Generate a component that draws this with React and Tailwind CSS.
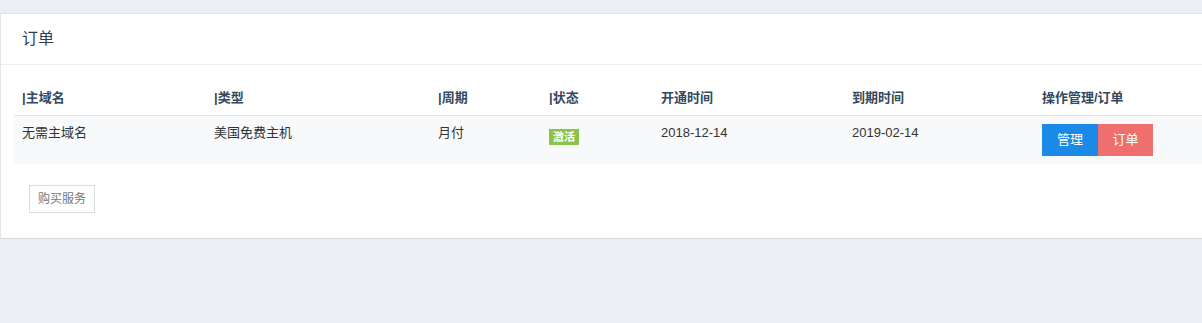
import React from 'react';

const rows = [
  {
    domain: '无需主域名',
    type: '美国免费主机',
    cycle: '月付',
    status: '激活',
    start: '2018-12-14',
    end: '2019-02-14',
  },
];

export default function App() {
  return (
    <div
      className="min-h-[323px] w-full overflow-hidden bg-[#ebeef2] pt-[13px] text-[13px]"
      style={{ fontFamily: '"Liberation Sans", "Noto Sans CJK SC", sans-serif' }}
    >
      {/* Orders panel */}
      <div className="w-[1240px] border-t border-l border-[#e3e6ea] border-b border-b-[#d3d6da] bg-white">
        <div className="flex h-[51px] items-center border-b border-[#eceef1] px-[21px]">
          <h2 className="text-[16px] text-[#2c3e50]">订单</h2>
        </div>

        <div className="pl-[13px] pt-[15px] pb-[25px]">
          <table className="w-full border-collapse text-left">
            <thead>
              <tr className="h-[35px] border-b border-[#e4e7ea] text-[#34495e]">
                <th className="w-[192px] px-2 font-bold">|主域名</th>
                <th className="w-[224px] px-2 font-bold">|类型</th>
                <th className="w-[111px] px-2 font-bold">|周期</th>
                <th className="w-[112px] px-2 font-bold">|状态</th>
                <th className="w-[191px] px-2 font-bold">开通时间</th>
                <th className="w-[190px] px-2 font-bold">到期时间</th>
                <th className="px-2 font-bold">操作管理/订单</th>
              </tr>
            </thead>
            <tbody>
              {rows.map((r) => (
                <tr key={r.domain} className="h-[49px] bg-[#f8f9fb] align-top text-[#333]">
                  <td className="px-2 pt-[8px] leading-[18px]">{r.domain}</td>
                  <td className="px-2 pt-[8px] leading-[18px]">{r.type}</td>
                  <td className="px-2 pt-[8px] leading-[18px]">{r.cycle}</td>
                  <td className="px-2 pt-[11px]">
                    <span className="inline-block h-[16px] bg-[#8bc34a] px-[4px] text-[11px] leading-[16px] font-bold text-white">
                      {r.status}
                    </span>
                  </td>
                  <td className="px-2 pt-[8px] leading-[18px]">{r.start}</td>
                  <td className="px-2 pt-[8px] leading-[18px]">{r.end}</td>
                  <td className="px-2 pt-[8px]">
                    <div className="flex">
                      <button className="h-[32px] w-[56px] bg-[#1a8ae6] text-white">管理</button>
                      <button className="h-[32px] w-[55px] bg-[#ef6e6e] text-white">订单</button>
                    </div>
                  </td>
                </tr>
              ))}
            </tbody>
          </table>

          <button className="mt-[21px] ml-[15px] h-[28px] w-[66px] border border-[#d9dbde] bg-white text-[12px] text-[#777]">
            购买服务
          </button>
        </div>
      </div>
    </div>
  );
}
